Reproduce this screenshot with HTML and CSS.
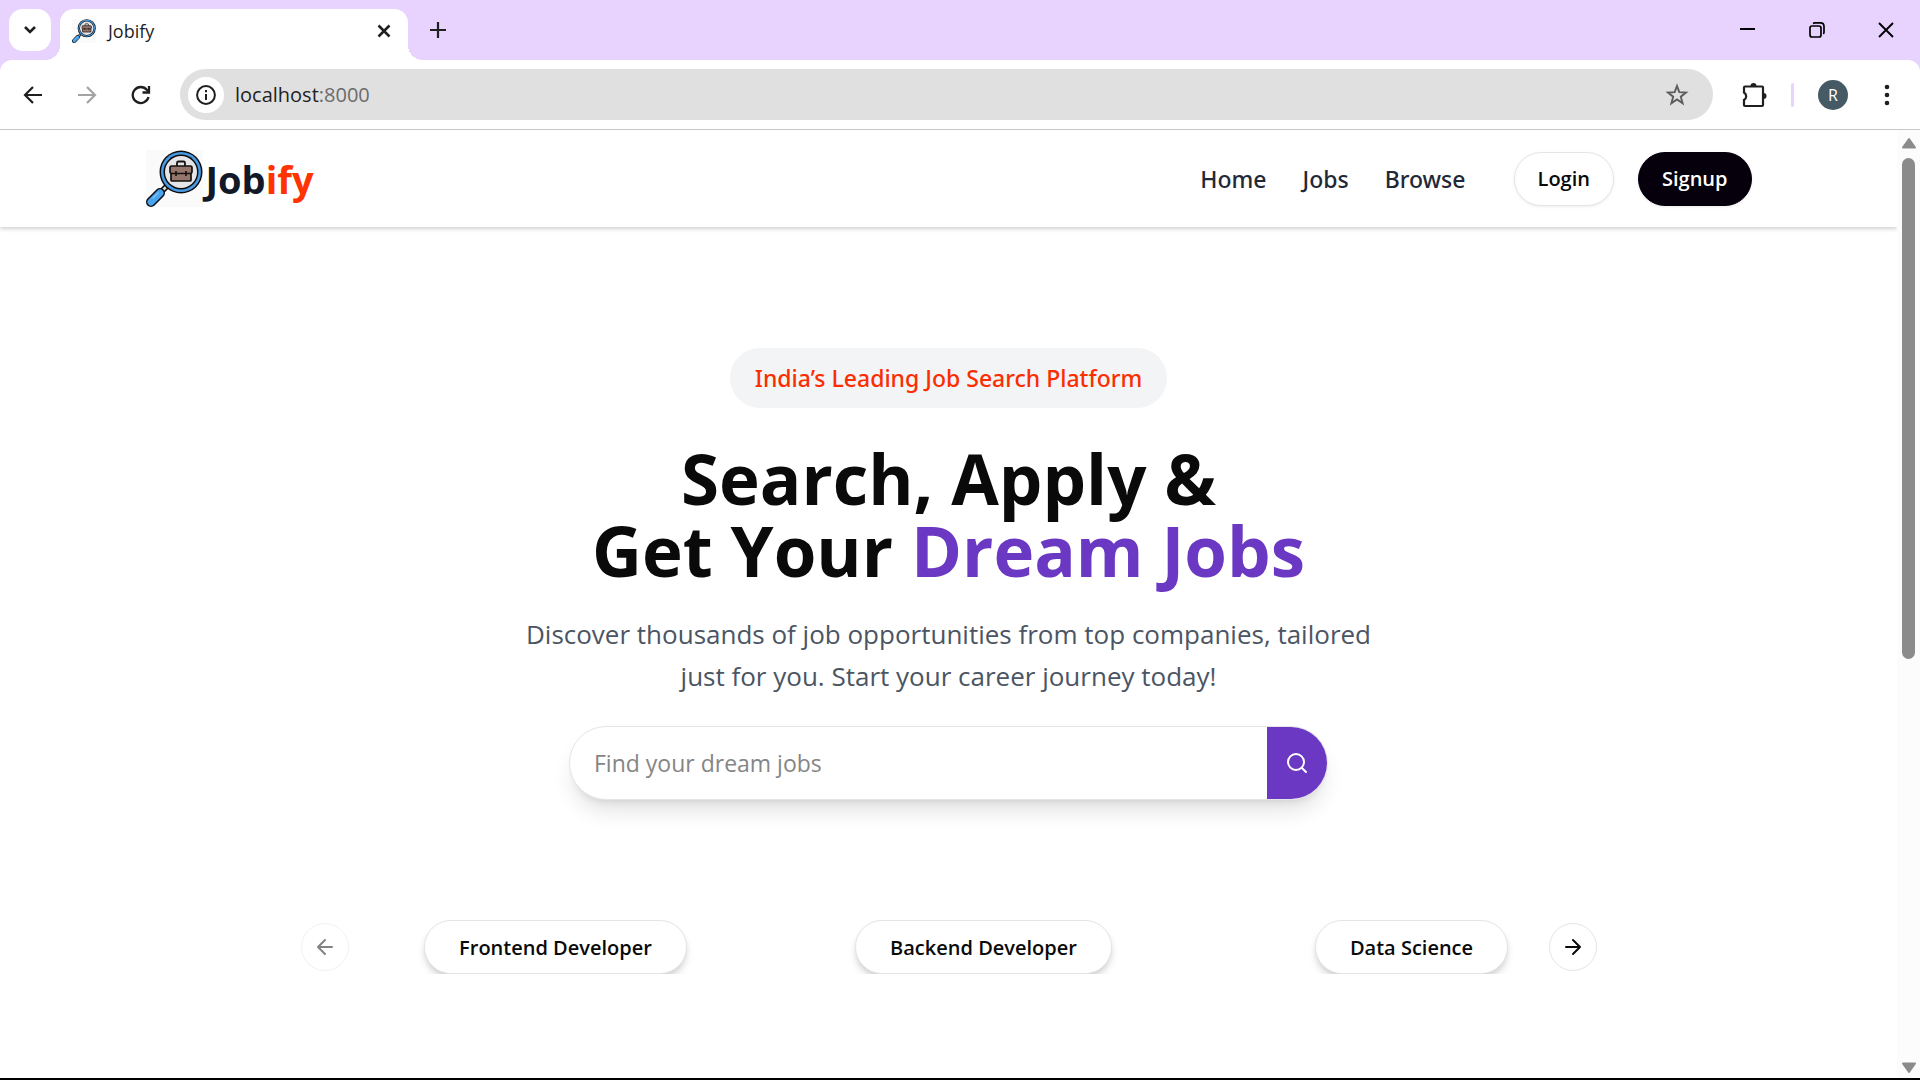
FILE: index.html
```html
<!DOCTYPE html>
<html lang="en">
<head>
<meta charset="utf-8">
<title>Jobify</title>
<meta name="viewport" content="width=device-width, initial-scale=1">
<link rel="stylesheet" href="styles.css">
</head>
<body>
<svg class="defs" aria-hidden="true">
  <symbol id="logo" viewBox="0 0 57 57">
    <rect width="57" height="57" fill="#fafafa"/>
    <path d="M15.500 41.500 21 36" stroke="#111" stroke-width="6"/>
    <path d="M15.500 41.500 21 36" stroke="#ddd" stroke-width="2.500"/>
    <path d="M5 52 14 43" stroke="#0b0f14" stroke-width="10" stroke-linecap="round"/>
    <path d="M5 52 14 43" stroke="#4aa3ec" stroke-width="7" stroke-linecap="round"/>
    <path d="M7 48 12 43" stroke="#7cc0f6" stroke-width="1.500" stroke-linecap="round"/>
    <circle cx="35" cy="22" r="21.500" fill="#0b0f14"/>
    <circle cx="35" cy="22" r="20" fill="#4a9be0"/>
    <circle cx="35" cy="22" r="17.500" fill="#0b0f14"/>
    <circle cx="35" cy="22" r="16" fill="#e6e6e8"/>
    <path d="M31 16v-3q0-1.500 1.500-1.500h5q1.500 0 1.500 1.500v3" fill="none" stroke="#16100f" stroke-width="1.800"/>
    <path d="M25.500 16h19q1.500 0 1.500 1.500v4q0 1.500-1 2V30q0 1-1 1H26q-1 0-1-1v-6.500q-1-.5-1-2v-4q0-1.500 1.500-1.500z" fill="#94766d" stroke="#16100f" stroke-width="1.700"/>
    <path d="M25 23.500h20M30 21v5M40 21v5" stroke="#16100f" stroke-width="1.600"/>
  </symbol>
</svg>

<header class="tabstrip">
  <button class="tab-search" aria-label="Search tabs">
    <svg width="14" height="10" viewBox="0 0 14 10"><path d="M2 2l5 5 5-5" fill="none" stroke="#1f1f1f" stroke-width="2.600"/></svg>
  </button>
  <div class="tab">
    <svg class="favicon" aria-hidden="true"><use href="#logo"/></svg>
    <span class="tab-title">Jobify</span>
    <button class="icon-btn" aria-label="Close tab">
      <svg width="14" height="14" viewBox="0 0 14 14"><path d="M1.500 1.500l11 11M12.500 1.500l-11 11" stroke="#1f1f1f" stroke-width="2.500"/></svg>
    </button>
  </div>
  <button class="icon-btn new-tab" aria-label="New tab">
    <svg width="16" height="16" viewBox="0 0 16 16"><path d="M8 0v16M0 8h16" stroke="#1f1f1f" stroke-width="2.200"/></svg>
  </button>
  <div class="window-controls">
    <button class="icon-btn" aria-label="Minimize"><svg width="16" height="16" viewBox="0 0 16 16"><path d="M0 7h15" stroke="#000" stroke-width="2"/></svg></button>
    <button class="icon-btn" aria-label="Restore"><svg width="16" height="16" viewBox="0 0 16 16" fill="none" stroke="#000" stroke-width="1.700"><rect x="1" y="4" width="11" height="11" rx="2"/><path d="M4 1.500q.8-.6 2-.6h5.500q3.500 0 3.500 3.500V10q0 1.200-.7 2"/></svg></button>
    <button class="icon-btn" aria-label="Close"><svg width="16" height="16" viewBox="0 0 16 16"><path d="M1 1l14 14M15 1L1 15" stroke="#000" stroke-width="1.900"/></svg></button>
  </div>
</header>

<div class="toolbar">
  <div class="nav-buttons">
    <button class="icon-btn" aria-label="Back"><svg width="20" height="20" viewBox="0 0 20 20" fill="none" stroke="#1f1f1f" stroke-width="2.200"><path d="M19 10H2M10 2l-8 8 8 8"/></svg></button>
    <button class="icon-btn" aria-label="Forward"><svg width="20" height="20" viewBox="0 0 20 20" fill="none" stroke="#a3a3a3" stroke-width="2.200"><path d="M1 10h17M10 2l8 8-8 8"/></svg></button>
    <button class="icon-btn" aria-label="Reload"><svg width="20" height="20" viewBox="0 0 20 20" fill="none" stroke="#1f1f1f" stroke-width="2.300"><path d="M17.500 12A8 8 0 1 1 16 5l2 2"/><path d="M18 1v6.500h-6.500"/></svg></button>
  </div>
  <div class="omnibox">
    <button class="site-info" aria-label="View site information">
      <svg width="20" height="20" viewBox="0 0 20 20"><circle cx="10" cy="10" r="8.900" fill="none" stroke="#1f1f1f" stroke-width="2"/><path d="M10 9v6M10 5v2.200" stroke="#1f1f1f" stroke-width="2"/></svg>
    </button>
    <span class="url">localhost<span class="port">:8000</span></span>
    <button class="icon-btn" aria-label="Bookmark this tab"><svg width="24" height="24" viewBox="0 0 24 24"><path d="M12 3l2.300 6.200 6.700.3-5.200 4.200 1.800 6.600L12 16.500l-5.600 3.800 1.800-6.600L3 9.500l6.700-.3z" fill="none" stroke="#5c5c5c" stroke-width="1.900"/></svg></button>
  </div>
  <div class="toolbar-end">
    <button class="icon-btn" aria-label="Extensions"><svg width="26" height="26" viewBox="0 0 26 26"><path d="M4 4.500h17q1 0 1 1V23q0 1-1 1H4q-1 0-1-1v-5a4.300 4.300 0 0 0 0-7.500v-5q0-1 1-1z" fill="none" stroke="#1f1f1f" stroke-width="2.200"/><path d="M9.500 4a3 3 0 0 1 6 0zM22.500 11a3 3 0 0 1 0 6z" fill="#1f1f1f"/></svg></button>
    <span class="divider"></span>
    <button class="avatar" aria-label="Profile R">R</button>
    <button class="icon-btn" aria-label="Menu"><svg width="6" height="22" viewBox="0 0 6 22" fill="#1f1f1f"><circle cx="3" cy="3" r="2.300"/><circle cx="3" cy="11" r="2.300"/><circle cx="3" cy="19" r="2.300"/></svg></button>
  </div>
</div>

<div class="viewport">
  <div class="page">
    <header class="site-header">
      <div class="site-header-inner">
        <a class="brand" href="#">
          <svg class="brand-mark" aria-hidden="true"><use href="#logo"/></svg>
          <span>Job<span class="brand-accent">ify</span></span>
        </a>
        <nav class="site-nav">
          <a href="#">Home</a>
          <a href="#">Jobs</a>
          <a href="#">Browse</a>
        </nav>
        <div class="auth">
          <button class="btn btn-outline">Login</button>
          <button class="btn btn-dark">Signup</button>
        </div>
      </div>
    </header>

    <main class="hero">
      <span class="badge">India’s Leading Job Search Platform</span>
      <h1>Search, Apply &amp;<br>Get Your <span class="accent">Dream Jobs</span></h1>
      <p>Discover thousands of job opportunities from top companies, tailored just for you. Start your career journey today!</p>
      <form class="search">
        <input type="text" aria-label="Find your dream jobs" placeholder="Find your dream jobs">
        <button type="button" aria-label="Search">
          <svg width="24" height="24" viewBox="0 0 24 24" fill="none" stroke="#fff" stroke-width="2" stroke-linecap="round"><circle cx="11" cy="11" r="8"/><path d="M21 21l-4.300-4.300"/></svg>
        </button>
      </form>
      <section class="carousel" aria-label="Job categories">
        <button class="arrow" disabled aria-label="Previous"><svg width="24" height="24" viewBox="0 0 24 24" fill="none" stroke="#0a0a0a" stroke-width="2" stroke-linecap="round" stroke-linejoin="round"><path d="M12 19l-7-7 7-7M19 12H5"/></svg></button>
        <div class="track">
          <button class="chip">Frontend Developer</button>
          <button class="chip">Backend Developer</button>
          <button class="chip">Data Science</button>
        </div>
        <button class="arrow" aria-label="Next"><svg width="24" height="24" viewBox="0 0 24 24" fill="none" stroke="#0a0a0a" stroke-width="2" stroke-linecap="round" stroke-linejoin="round"><path d="M5 12h14M12 5l7 7-7 7"/></svg></button>
      </section>
    </main>
  </div>

  <div class="scrollbar" aria-hidden="true">
    <svg width="16" height="12" viewBox="0 0 16 12"><path d="M8 2l6 8.500H2z" fill="#8b8b8b" stroke="#8b8b8b" stroke-width="2" stroke-linejoin="round"/></svg>
    <div class="rail"><div class="thumb"></div></div>
    <svg width="16" height="12" viewBox="0 0 16 12"><path d="M8 10L2 1.500h12z" fill="#8b8b8b" stroke="#8b8b8b" stroke-width="2" stroke-linejoin="round"/></svg>
  </div>
</div>
</body>
</html>
```
FILE: styles.css
```css
* { box-sizing: border-box; }

body {
  margin: 0;
  min-height: 100vh;
  display: flex;
  flex-direction: column;
  font-family: "Open Sans", "Noto Sans", sans-serif;
  color: #0a0a0a;
  background: #fff;
  border-bottom: 2px solid #000;
}

button, input { font: inherit; color: inherit; }
button { padding: 0; border: 0; background: none; }
a { color: inherit; text-decoration: none; }
svg { display: block; flex: none; }
.defs { width: 0; height: 0; position: absolute; }

.icon-btn {
  display: grid;
  place-items: center;
  width: 32px;
  height: 32px;
}

/* Tab strip */
.tabstrip {
  display: flex;
  align-items: center;
  height: 60px;
  padding: 0 18px 0 9px;
  background: #e8d3ff;
}
.tab-search {
  display: grid;
  place-items: center;
  width: 42px;
  height: 42px;
  border-radius: 14px;
  background: #fff;
}
.tab {
  position: relative;
  display: flex;
  align-items: center;
  align-self: flex-end;
  gap: 12px;
  width: 348px;
  height: 51px;
  margin-left: 9px;
  padding: 0 8px 8px 12px;
  border-radius: 14px 14px 0 0;
  background: #fff;
}
.tab::before, .tab::after {
  content: "";
  position: absolute;
  bottom: 0;
  width: 15px;
  height: 15px;
}
.tab::before { right: 100%; background: radial-gradient(circle at 0 0, transparent 15px, #fff 15px); }
.tab::after { left: 100%; background: radial-gradient(circle at 100% 0, transparent 15px, #fff 15px); }
.favicon { width: 24px; height: 24px; }
.tab-title { flex: 1; font-size: 18px; color: #1f1f1f; }
.new-tab { margin-left: 14px; }
.window-controls { display: flex; gap: 37px; margin-left: auto; }

/* Toolbar */
.toolbar {
  display: flex;
  align-items: center;
  height: 70px;
  padding: 0 17px;
  border-bottom: 1px solid #c8c8c8;
  background: linear-gradient(#e8d3ff, #e8d3ff) top / 100% 12px no-repeat;
  position: relative;
  z-index: 0;
}
.toolbar::before {
  content: "";
  position: absolute;
  inset: 0;
  z-index: -1;
  border-radius: 12px 12px 0 0;
  background: #fff;
}
.nav-buttons { display: flex; gap: 22px; }
.omnibox {
  display: flex;
  align-items: center;
  flex: 1;
  height: 51px;
  margin-left: 23px;
  padding: 0 20px 0 8px;
  border-radius: 26px;
  background: #e0e0e0;
}
.site-info {
  display: grid;
  place-items: center;
  width: 36px;
  height: 36px;
  border-radius: 50%;
  background: #fff;
}
.url { flex: 1; margin-left: 11px; font-size: 20px; color: #1f1f1f; }
.port { color: #6b6b6b; }
.toolbar-end { display: flex; align-items: center; margin-left: 25px; }
.divider { width: 3px; height: 24px; margin-left: 21px; border-radius: 2px; background: #e8d3ff; }
.avatar {
  width: 30px;
  height: 30px;
  margin: 0 23px 0 24px;
  border-radius: 50%;
  font-size: 16px;
  background: #455a64;
  color: #fff;
}

/* Page and scrollbar */
.viewport { display: flex; flex: 1; }
.page { flex: 1; min-width: 0; }
.scrollbar {
  display: flex;
  flex-direction: column;
  align-items: center;
  gap: 9px;
  width: 23px;
  padding: 7px 0 4px;
  background: #fcfcfc;
}
.rail { flex: 1; }
.thumb { width: 13px; height: 56%; border-radius: 7px; background: #8b8b8b; }

/* Site header */
.site-header {
  padding: 0 24px;
  box-shadow: 0 2px 4px rgba(0, 0, 0, .18);
}
.site-header-inner {
  display: flex;
  align-items: center;
  max-width: 1606px;
  height: 97px;
  margin: 0 auto;
}
.brand {
  display: flex;
  align-items: center;
  gap: 3px;
  margin-right: auto;
  font-size: 38px;
  font-weight: 700;
  color: #111827;
}
.brand-mark { width: 57px; height: 57px; }
.brand-accent { color: #ff3300; }
.site-nav {
  display: flex;
  gap: 36px;
  font-family: "Noto Sans", "Open Sans", sans-serif;
  font-size: 23px;
  font-weight: 500;
  color: #1f2937;
}
.auth { display: flex; gap: 24px; margin-left: 48px; }
.btn {
  height: 54px;
  padding: 0 23px;
  border: 1px solid #e5e5e5;
  border-radius: 27px;
  font-size: 20px;
  font-weight: 600;
  box-shadow: 0 1px 3px rgba(0, 0, 0, .08);
}
.btn-outline { background: #fff; }
.btn-dark { border-color: #06000d; background: #06000d; color: #fff; }

/* Hero */
.hero {
  display: flex;
  flex-direction: column;
  align-items: center;
  padding: 121px 24px 104px;
  text-align: center;
}
.badge {
  padding: 0 25px;
  border-radius: 30px;
  font-family: "Noto Sans", "Open Sans", sans-serif;
  font-size: 23px;
  font-weight: 500;
  line-height: 60px;
  background: #f3f4f6;
  color: #fa2e00;
}
h1 {
  margin: 34px 0 0;
  font-size: 69px;
  font-weight: 700;
  line-height: 72px;
}
.accent { color: #6a38c2; }
.hero p {
  max-width: 864px;
  margin: 27px 0 0;
  font-size: 26px;
  line-height: 42px;
  color: #4b5563;
}
.search {
  display: flex;
  width: 100%;
  max-width: 759px;
  height: 74px;
  margin-top: 29px;
  border: 1px solid #e5e5e5;
  border-radius: 37px;
  overflow: hidden;
  background: #fff;
  box-shadow: 0 15px 22px -5px rgba(0, 0, 0, .12), 0 6px 9px -6px rgba(0, 0, 0, .12);
}
.search input {
  flex: 1;
  min-width: 0;
  padding: 0 24px;
  border: 0;
  outline: 0;
  background: none;
  font-size: 23px;
}
.search input::placeholder { color: #858585; }
.search button { display: grid; place-items: center; width: 60px; background: #6a38c2; }

/* Category carousel */
.carousel {
  display: flex;
  align-items: center;
  width: 100%;
  max-width: 1296px;
  margin-top: 120px;
}
.arrow {
  display: grid;
  place-items: center;
  width: 48px;
  height: 48px;
  border: 1px solid #e5e5e5;
  border-radius: 50%;
  background: #fff;
}
.arrow:disabled { opacity: .5; }
.track {
  display: grid;
  grid-template-columns: repeat(3, 1fr);
  gap: 164px;
  flex: 1;
  padding: 0 5px 0 75px;
  overflow: hidden;
}
.chip {
  justify-self: center;
  height: 54px;
  padding: 0 34px;
  border: 1px solid #e5e5e5;
  border-radius: 27px;
  font-size: 20px;
  font-weight: 600;
  white-space: nowrap;
  background: #fff;
  box-shadow: 0 6px 9px -1px rgba(0, 0, 0, .12), 0 3px 6px -2px rgba(0, 0, 0, .12);
}
```
